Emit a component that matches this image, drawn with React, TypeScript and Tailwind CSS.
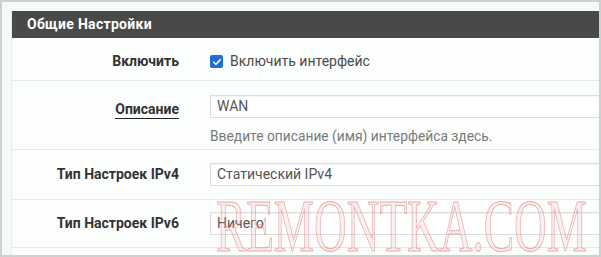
import React from 'react';

const font = { fontFamily: 'Roboto, "Liberation Sans", sans-serif' };

const rows = [
  { label: 'Тип Настроек IPv4', value: 'Статический IPv4', h: 'h-[50px]' },
  { label: 'Тип Настроек IPv6', value: 'Ничего', h: 'h-[48px]' },
];

export default function App() {
  return (
    <div
      className="relative w-[601px] h-[257px] overflow-hidden border-2 border-[#cdd1d1] bg-[#f6f9f9] pl-[9px] pt-[9px]"
      style={font}
    >
      <div className="bg-[#fcfefe] border-l border-[#e8eded] h-full">
        {/* header */}
        <div className="h-[27px] bg-[#484948] flex items-center px-[15px]">
          <span className="text-white font-bold text-[14px] tracking-[0.3px]">Общие Настройки</span>
        </div>

        {/* enable row */}
        <div className="h-[43px] flex items-center pt-[5px] border-b border-[#e4eaea]">
          <div className="w-[167px] text-right text-[14px] font-bold text-[#333]">Включить</div>
          <label className="ml-[31px] flex items-center gap-[7px] text-[14px] text-[#4a4a4a]">
            <span className="w-[13px] h-[13px] rounded-[2px] bg-[#1c6fdc] flex items-center justify-center">
              <svg viewBox="0 0 12 12" className="w-[10px] h-[10px]">
                <path d="M2.2 6.3 L4.8 8.8 L9.8 3.2" fill="none" stroke="white" strokeWidth="1.9" strokeLinecap="round" strokeLinejoin="round" />
              </svg>
            </span>
            Включить интерфейс
          </label>
        </div>

        {/* description row */}
        <div className="h-[69px] flex border-b border-[#e4eaea] pt-[14px]">
          <div className="w-[167px] text-right pt-[2px]">
            <span className="text-[14px] font-bold text-[#333] border-b-[1.5px] border-[#222] pb-[1px]">Описание</span>
          </div>
          <div className="ml-[31px] flex-1 flex flex-col">
            <div className="h-[23px] bg-white border border-[#dcdede] border-r-0 shadow-[inset_0_1px_1px_rgba(0,0,0,0.05)] flex items-center px-[6px] text-[14px] text-[#555]">
              WAN
            </div>
            <div className="mt-[8px] text-[13.8px] text-[#7a7a7a]">Введите описание (имя) интерфейса здесь.</div>
          </div>
        </div>

        {rows.map((r) => (
          <div key={r.label} className={`${r.h} flex items-center border-b border-[#e4eaea]`}>
            <div className="w-[167px] text-right text-[14px] font-bold text-[#333]">{r.label}</div>
            <div className="ml-[31px] flex-1 h-[23px] bg-white border border-[#dcdede] border-r-0 shadow-[inset_0_1px_1px_rgba(0,0,0,0.05)] flex items-center px-[6px] text-[14px] text-[#555]">
              {r.value}
            </div>
          </div>
        ))}
      </div>

      {/* watermark */}
      <div
        className="pointer-events-none absolute left-[214px] top-[188px] text-[73px] leading-none whitespace-nowrap origin-left scale-x-[0.62] text-[rgba(240,190,190,0.25)] [-webkit-text-stroke:1px_rgba(215,110,110,0.55)]"
        style={{ fontFamily: '"Liberation Serif", serif' }}
      >
        REMONTKA.COM
      </div>
    </div>
  );
}
